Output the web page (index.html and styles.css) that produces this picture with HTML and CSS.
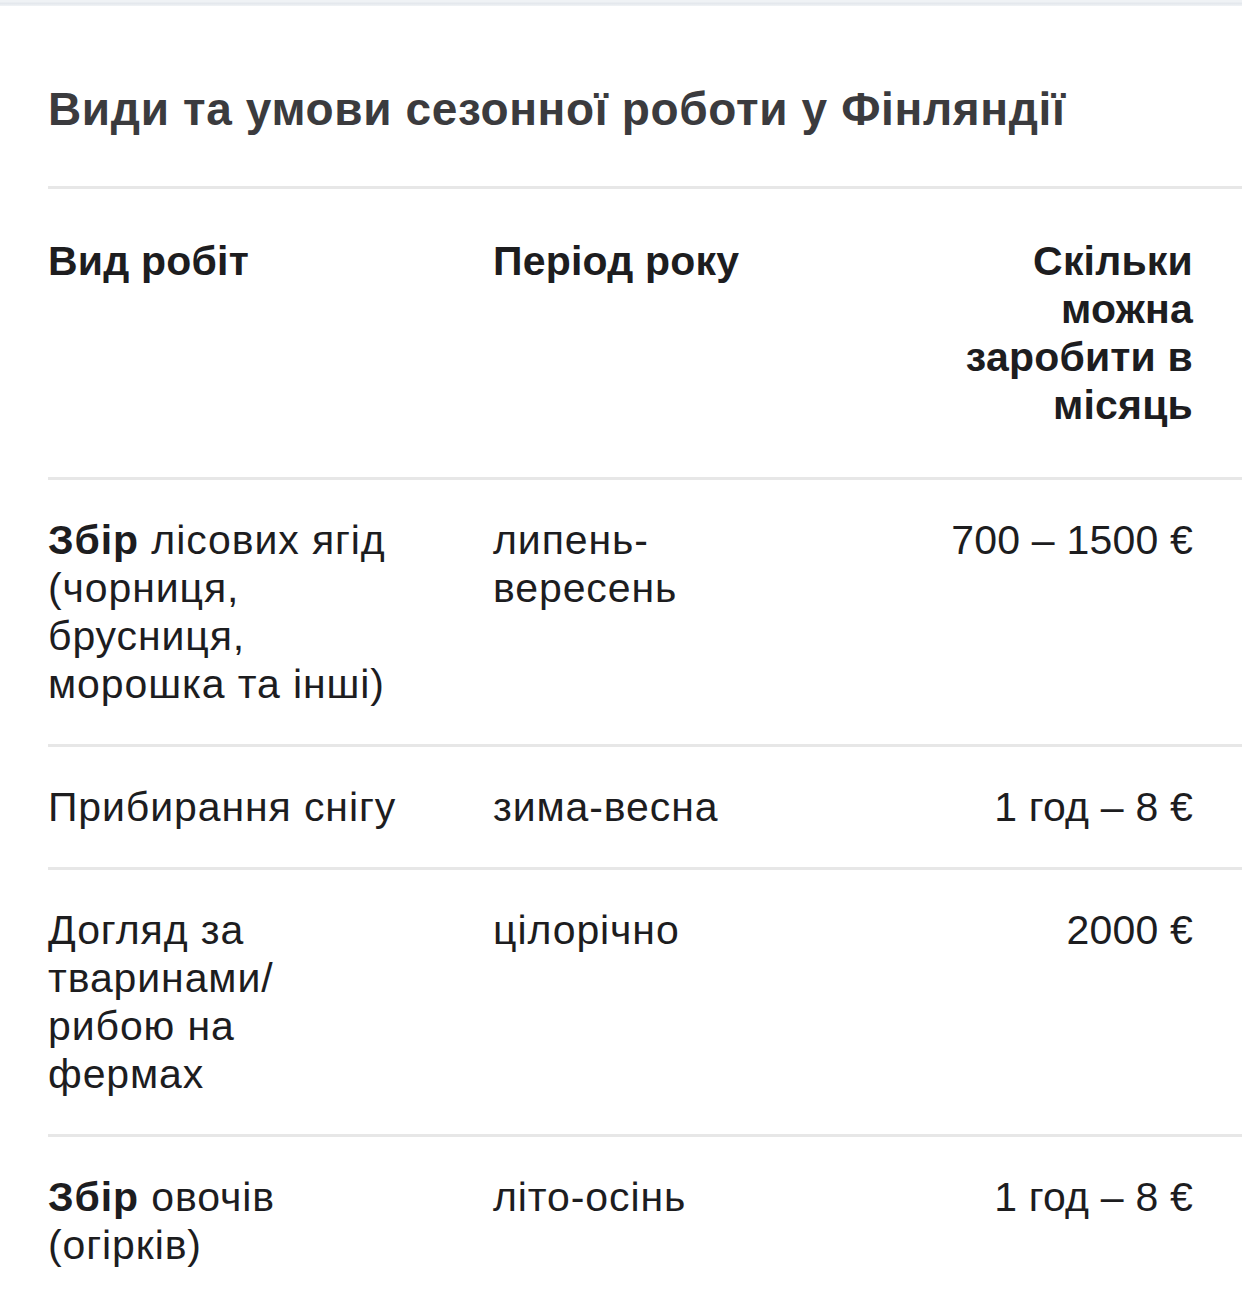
FILE: index.html
```html
<!DOCTYPE html>
<html lang="uk">
<head>
<meta charset="utf-8">
<title>Види та умови сезонної роботи у Фінляндії</title>
<link rel="stylesheet" href="styles.css">
</head>
<body>
<div class="topbar"></div>
<main class="article">
  <h2 class="title">Види та умови сезонної роботи у Фінляндії</h2>
  <div class="table">
    <div class="row head">
      <div class="cell">Вид робіт</div>
      <div class="cell">Період року</div>
      <div class="cell num">Скільки<br>можна<br>заробити в<br>місяць</div>
    </div>
    <div class="row">
      <div class="cell"><b>Збір</b> лісових ягід<br>(чорниця,<br>брусниця,<br>морошка та інші)</div>
      <div class="cell">липень-<br>вересень</div>
      <div class="cell num">700 – 1500 €</div>
    </div>
    <div class="row">
      <div class="cell">Прибирання снігу</div>
      <div class="cell">зима-весна</div>
      <div class="cell num">1 год – 8 €</div>
    </div>
    <div class="row">
      <div class="cell">Догляд за<br>тваринами/<br>рибою на<br>фермах</div>
      <div class="cell">цілорічно</div>
      <div class="cell num">2000 €</div>
    </div>
    <div class="row">
      <div class="cell"><b>Збір</b> овочів<br>(огірків)</div>
      <div class="cell">літо-осінь</div>
      <div class="cell num">1 год – 8 €</div>
    </div>
  </div>
</main>
</body>
</html>
```

FILE: styles.css
```css
html, body {
  margin: 0;
  padding: 0;
  background: #ffffff;
}

body {
  font-family: "Liberation Sans", Arial, Helvetica, sans-serif;
  color: #1d1d1f;
  overflow: hidden;
}

.topbar {
  height: 6px;
  background: linear-gradient(#eff2f5 0, #eff2f5 2px, #e4e8ed 3px, #e4e8ed 4px, #eef1f4 5px);
}

.article {
  padding-left: 48px;
}

.title {
  margin: 75px 0 49px;
  font-size: 46px;
  line-height: 56px;
  font-weight: 700;
  letter-spacing: 0.65px;
  color: #3b3b3e;
  white-space: nowrap;
}

.table {
  display: flex;
  flex-direction: column;
}

.row {
  display: grid;
  grid-template-columns: 385px 300px 1fr;
  column-gap: 60px;
  padding: 36px 49px 36px 0;
  border-top: 3px solid #e7e7e7;
  font-size: 41px;
  line-height: 48px;
  letter-spacing: 0.9px;
  white-space: nowrap;
}

.row.head {
  padding: 48px 49px 48px 0;
  font-weight: 700;
  letter-spacing: 0.2px;
}

.cell b {
  font-weight: 700;
}

.num {
  text-align: right;
  letter-spacing: 0.2px;
}

.row.head .num {
  letter-spacing: 0.2px;
}
```
